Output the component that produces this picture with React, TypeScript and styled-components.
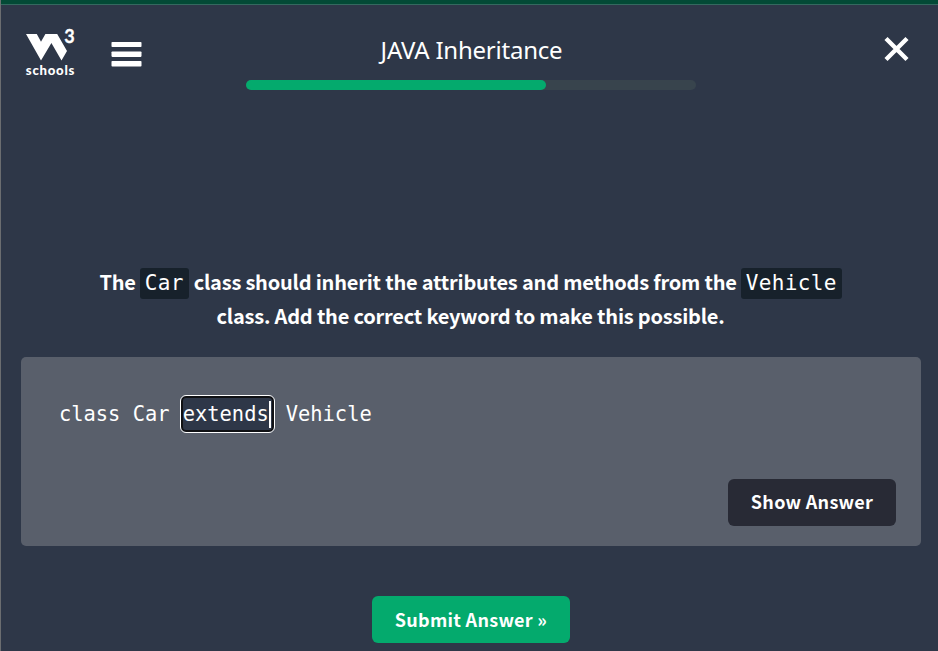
import React from "react";
import styled, { createGlobalStyle } from "styled-components";

const sans = `"Noto Sans CJK SC", "Noto Sans", sans-serif`;
const mono = `"DejaVu Sans Mono", monospace`;
const logoFont = `Lato, sans-serif`;

const GlobalStyle = createGlobalStyle`
  * { box-sizing: border-box; }
  body { margin: 0; background: #2e3748; }
`;

const Page = styled.div`
  display: flex;
  flex-direction: column;
  height: 651px;
  overflow: hidden;
  background: #2e3748;
  color: #fff;
  border-left: 1px solid #6b6d70;
`;

const TopStrip = styled.div`
  height: 5px;
  flex: none;
  background: #034a36;
  border-bottom: 1px solid #34695f;
`;

const Header = styled.header`
  display: grid;
  grid-template-columns: 245px 450px 1fr;
  height: 260px;
  flex: none;
`;

const Brand = styled.div`
  display: flex;
  align-items: flex-start;
  padding: 17px 0 0 24px;
  gap: 36px;
`;

const LogoMark = styled.svg`
  display: block;
  width: 50px;
  height: 58px;
  overflow: visible;
`;

const IconButton = styled.button`
  display: block;
  padding: 0;
  border: 0;
  background: none;
  color: #fff;
  line-height: 0;
`;

const MenuButton = styled(IconButton)`
  margin-top: 19px;
`;

const Progress = styled.div`
  padding-top: 28px;
`;

const Title = styled.h1`
  margin: 0;
  height: 47px;
  padding-left: 1px;
  font: 400 24px/34px "Noto Sans", sans-serif;
  letter-spacing: -0.22px;
  text-align: center;
  white-space: nowrap;
`;

const Track = styled.div`
  height: 10px;
  border-radius: 5px;
  background: #38444d;
`;

const Fill = styled.div`
  width: 300px;
  height: 10px;
  border-radius: 5px;
  background: #04aa6d;
`;

const CloseArea = styled.div`
  display: flex;
  justify-content: flex-end;
  align-items: flex-start;
  padding: 31px 29px 0 0;
`;

const Question = styled.div`
  height: 92px;
  flex: none;
  font: 700 20px/34px ${sans};
  letter-spacing: -0.2px;
  padding-left: 2px;
`;

const Line = styled.div`
  display: flex;
  justify-content: center;
  align-items: center;
  height: 34px;
  white-space: pre;
`;

const Code = styled.code`
  margin: 2px 5px 0 4px;
  padding: 0 5px;
  height: 31px;
  border-radius: 3px;
  background: #17212b;
  font: 400 21px/30px ${mono};
  letter-spacing: 0.33px;

  &:last-child {
    margin-right: 0;
  }
`;

const Panel = styled.section`
  display: flex;
  flex-direction: column;
  justify-content: space-between;
  flex: none;
  width: 900px;
  height: 189px;
  margin-left: 20px;
  padding: 38px 25px 20px 38px;
  border-radius: 5px;
  background: #595f6b;
`;

const CodeLine = styled.div`
  display: flex;
  align-items: center;
  height: 38px;
  font: 400 20.4px/36px ${mono};
  white-space: pre;
`;

const Answer = styled.span`
  display: flex;
  align-items: center;
  width: 95px;
  height: 38px;
  margin: 0 11px 0 -2px;
  padding-left: 2px;
  border: 1px solid #fff;
  border-radius: 6px;
  background: #2e3748;
  box-shadow: inset 0 0 0 2px #101114;
`;

const Caret = styled.span`
  width: 2px;
  height: 27px;
  background: #fff;
`;

const Button = styled.button<{ $width: number; $color: string; $lineHeight: number }>`
  flex: none;
  display: flex;
  justify-content: center;
  width: ${(p) => p.$width}px;
  height: 47px;
  padding: 0;
  border: 0;
  border-radius: 6px;
  background: ${(p) => p.$color};
  color: #fff;
  font: 700 18px/${(p) => p.$lineHeight}px ${sans};
  letter-spacing: 0.28px;
  white-space: nowrap;
`;

const PanelActions = styled.div`
  display: flex;
  justify-content: flex-end;
`;

const Footer = styled.footer`
  display: flex;
  padding: 50px 0 0 371px;
`;

export default function App() {
  return (
    <>
      <GlobalStyle />
      <Page>
        <TopStrip />
        <Header>
          <Brand>
            <LogoMark viewBox="25 22 50 58" role="img" aria-label="W3Schools">
              <path
                fill="#fff"
                d="M26 34H36.8L41 41.8L45.4 34H57.2L67 51L61.5 60.5L51.4 43L41 60.5Z"
              />
              <text x="64.3" y="43.3" fill="#fff" stroke="#fff" strokeWidth="0.3" fontFamily={logoFont} fontWeight="700" fontSize="18" textLength="10.5">3</text>
              <text x="25.8" y="75" fill="#fff" fontFamily={logoFont} fontWeight="900" fontSize="13.2" textLength="48.6">schools</text>
            </LogoMark>
            <MenuButton aria-label="Menu">
              <svg width="31" height="27" viewBox="0 0 31 27" fill="currentColor">
                <rect x="0.5" y="1" width="30" height="5" rx="0.8" />
                <rect x="0.5" y="10.4" width="30" height="5.5" rx="0.8" />
                <rect x="0.5" y="20" width="30" height="5.5" rx="0.8" />
              </svg>
            </MenuButton>
          </Brand>
          <Progress>
            <Title>JAVA Inheritance</Title>
            <Track>
              <Fill />
            </Track>
          </Progress>
          <CloseArea>
            <IconButton aria-label="Close">
              <svg width="25" height="26" viewBox="0 0 25 26">
                <path d="M2 2.5L23 23.5M23 2.5L2 23.5" stroke="currentColor" strokeWidth="4.4" />
              </svg>
            </IconButton>
          </CloseArea>
        </Header>
        <Question>
          <Line>
            <span>The</span>
            <Code>Car</Code>
            <span>class should inherit the attributes and methods from the</span>
            <Code>Vehicle</Code>
          </Line>
          <Line>
            <span>class. Add the correct keyword to make this possible.</span>
          </Line>
        </Question>
        <Panel>
          <CodeLine>
            <span>{"class Car "}</span>
            <Answer>
              <span>extends</span>
              <Caret />
            </Answer>
            <span>Vehicle</span>
          </CodeLine>
          <PanelActions>
            <Button $width={168} $color="#282a35" $lineHeight={44}>Show Answer</Button>
          </PanelActions>
        </Panel>
        <Footer>
          <Button $width={198} $color="#04aa6d" $lineHeight={46}>Submit Answer »</Button>
        </Footer>
      </Page>
    </>
  );
}
